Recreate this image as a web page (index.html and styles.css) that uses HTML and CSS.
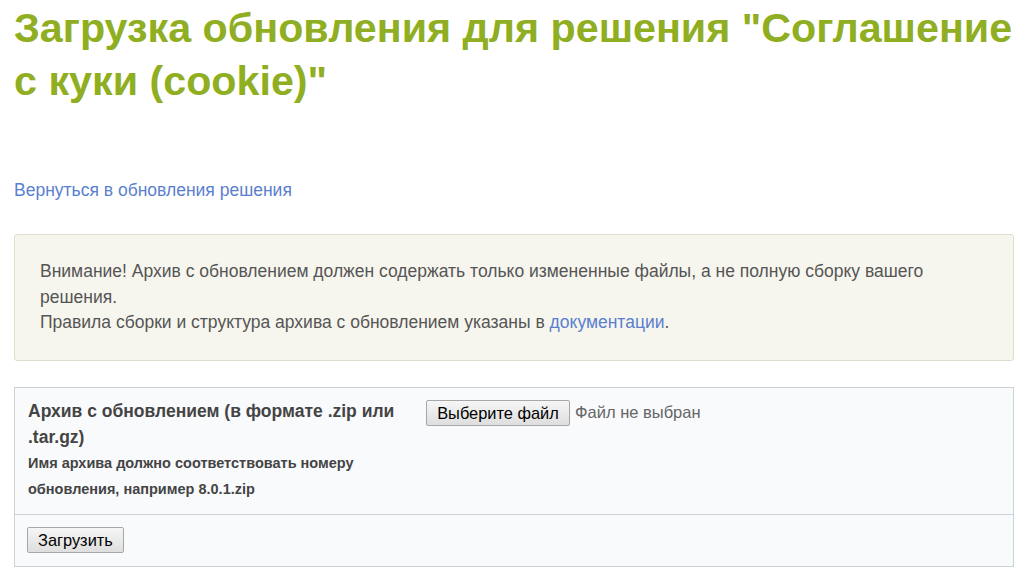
FILE: index.html
```html
<!DOCTYPE html>
<html lang="ru">
<head>
<meta charset="utf-8">
<title>Загрузка обновления</title>
<link rel="stylesheet" href="styles.css">
</head>
<body>
<div class="page">
  <h1 class="title">Загрузка обновления для решения "Соглашение с куки (cookie)"</h1>
  <p class="back"><a href="#" class="link">Вернуться в обновления решения</a></p>
  <div class="alert">
    Внимание! Архив с обновлением должен содержать только измененные файлы, а не полную сборку вашего решения.<br>
    Правила сборки и структура архива с обновлением указаны в <a href="#" class="link">документации</a>.
  </div>
  <form class="upload">
    <div class="upload-body">
      <div class="field-label">
        <div class="label-main">Архив с обновлением (в формате .zip или .tar.gz)</div>
        <div class="label-hint">Имя архива должно соответствовать номеру обновления, например 8.0.1.zip</div>
      </div>
      <div class="file-field">
        <button type="button" class="btn btn-file">Выберите файл</button>
        <span class="file-status">Файл не выбран</span>
      </div>
    </div>
    <div class="upload-foot">
      <button type="button" class="btn">Загрузить</button>
    </div>
  </form>
</div>
</body>
</html>
```
FILE: styles.css
```css
html, body {
  margin: 0;
  padding: 0;
  background: #fff;
}
body {
  font-family: "Liberation Sans", Arial, sans-serif;
  color: #555;
  font-size: 17.5px;
}
.page {
  padding: 2px 15px 0 14px;
}
.title {
  margin: 0;
  font-size: 41.25px;
  line-height: 53px;
  font-weight: bold;
  color: #8fae22;
}
.back {
  margin: 70px 0 0;
  line-height: 24px;
}
.link {
  color: #5b7fcf;
  text-decoration: none;
}
.alert {
  margin-top: 32px;
  background: #f7f6ee;
  border: 1px solid #dfdecb;
  border-radius: 3px;
  padding: 24px 25px 24px 25px;
  line-height: 25.5px;
  color: #555;
}
.upload {
  margin-top: 26px;
  border: 1px solid #cbd2d8;
  background: #f9fafc;
}
.upload-body {
  display: grid;
  grid-template-columns: 384px 1fr;
  column-gap: 14px;
  padding: 10px 13px 12px;
  border-bottom: 1px solid #cbd2d8;
}
.label-main {
  font-weight: bold;
  color: #444;
  line-height: 26px;
}
.label-hint {
  font-weight: bold;
  font-size: 14.5px;
  color: #444;
  line-height: 26px;
}
.file-field {
  display: flex;
  align-items: center;
  align-self: start;
  margin-top: 2px;
}
.btn {
  font-family: "Liberation Sans", Arial, sans-serif;
  font-size: 16.4px;
  color: #000;
  height: 26px;
  padding: 0 10px;
  border: 1px solid #a7a7a7;
  border-radius: 2px;
  background: linear-gradient(#f6f6f6, #dedede);
  line-height: 24px;
}
.btn-file {
  width: 144px;
}
.file-status {
  margin-left: 5px;
  color: #666;
  font-size: 16.5px;
}
.upload-foot {
  padding: 12px 12px 13px;
}
```
